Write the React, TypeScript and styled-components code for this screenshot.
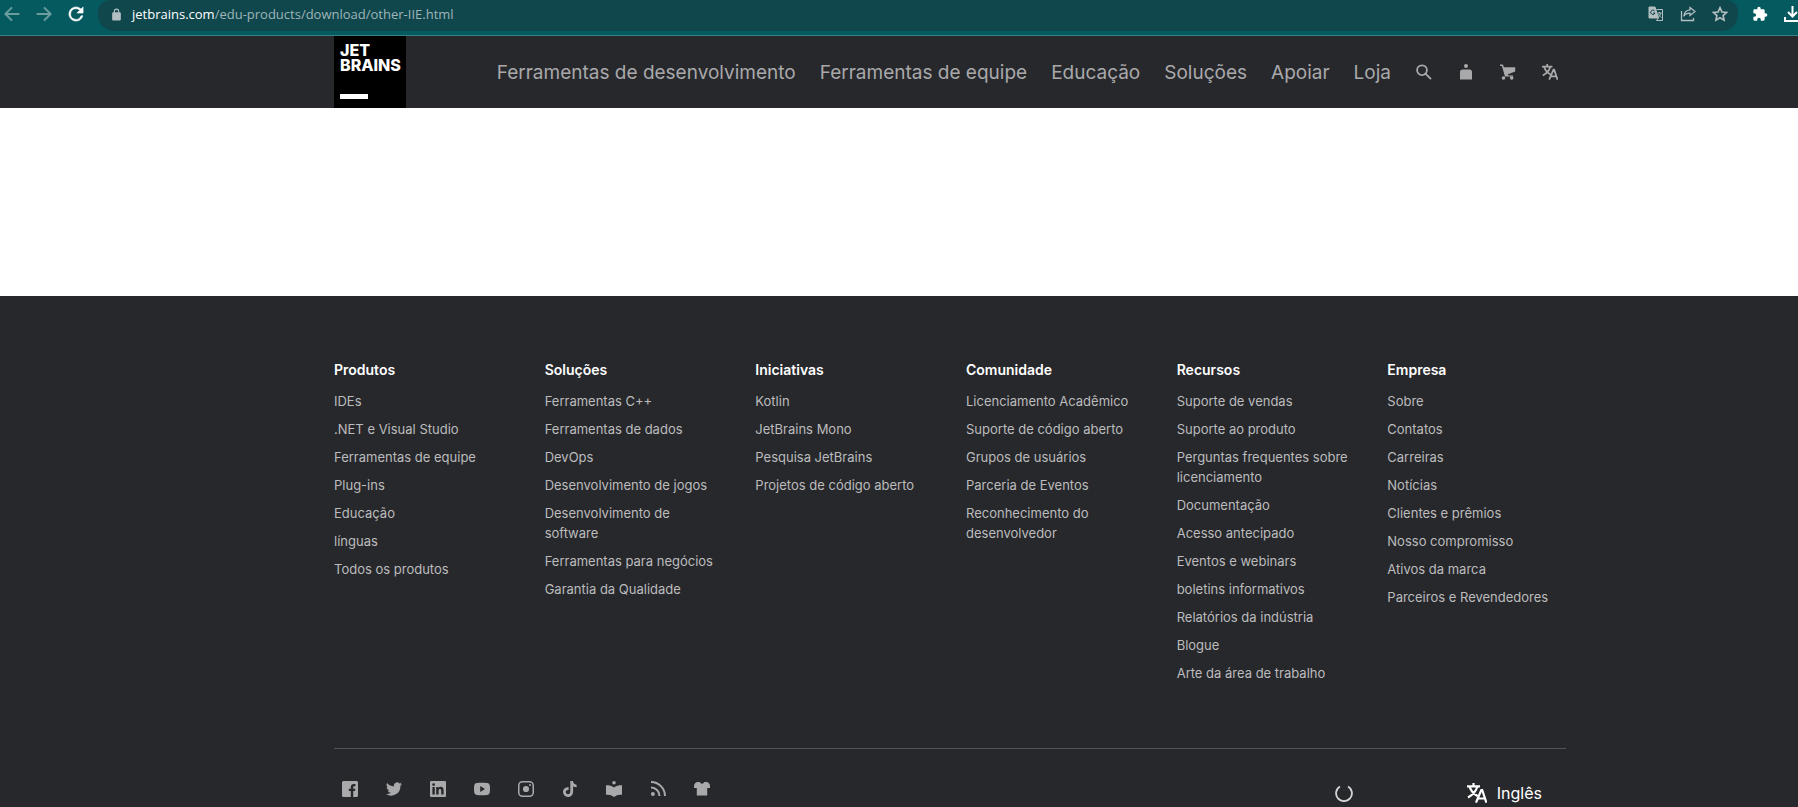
import React from "react";
import styled, { createGlobalStyle } from "styled-components";

const GlobalStyle = createGlobalStyle`
  *, *::before, *::after { box-sizing: border-box; }
  body { margin: 0; background: #ffffff; font-family: Inter, "Liberation Sans", sans-serif; }
  ul { list-style: none; margin: 0; padding: 0; }
  a { color: inherit; text-decoration: none; }
  button { border: 0; padding: 0; background: none; color: inherit; font: inherit; cursor: pointer; }
  svg { display: block; }
`;

const Page = styled.div`
  display: flex;
  flex-direction: column;
  min-height: 100vh;
  overflow-x: hidden;
`;

const BrowserBar = styled.div`
  display: flex;
  align-items: flex-start;
  height: 36px;
  overflow: hidden;
  background: #055a60;
  border-bottom: 1px solid #378083;
`;

const BarButtons = styled.div<{ $width: number; $start: number; $gap: number }>`
  display: flex;
  flex: none;
  align-items: center;
  gap: ${(p) => p.$gap}px;
  width: ${(p) => p.$width}px;
  height: 28px;
  padding-left: ${(p) => p.$start}px;
`;

const BarButton = styled.button<{ $muted?: boolean }>`
  flex: none;
  color: ${(p) => (p.$muted ? "#6d9c9f" : "#ffffff")};
`;

const AddressBar = styled.div`
  display: flex;
  flex: 1;
  align-items: center;
  height: 31px;
  padding: 0 10px 3px 12px;
  border-radius: 16px;
  border-top-left-radius: 12px;
  border-top-right-radius: 12px;
  background: #0f474d;
  color: #b4bfc1;
`;

const Address = styled.div`
  flex: 1;
  margin-left: 9px;
  font-family: "Open Sans", "Noto Sans", sans-serif;
  font-size: 13px;
  line-height: 20px;
  color: #9fb5b8;
  strong { font-weight: 400; color: #ffffff; }
`;

const AddressActions = styled.div`
  display: flex;
  gap: 16px;
`;

const Header = styled.header`
  display: flex;
  align-items: center;
  justify-content: space-between;
  height: 72px;
  padding: 0 232px 0 334px;
  background: #27282c;
  color: #a9a9ab;
`;

const Logo = styled.a`
  display: flex;
  flex-direction: column;
  justify-content: space-between;
  width: 72px;
  height: 72px;
  padding: 7px 6px 9px;
  background: #000000;
  color: #ffffff;
`;

const LogoText = styled.span`
  display: flex;
  flex-direction: column;
  font-size: 16px;
  font-weight: 800;
  line-height: 15px;
  white-space: nowrap;
`;

const LogoBar = styled.span`
  width: 28px;
  height: 5px;
  background: #ffffff;
`;

const Nav = styled.nav`
  display: flex;
  align-items: center;
  gap: 21px;
`;

const NavLinks = styled.div`
  display: flex;
  gap: 24px;
  padding-top: 2px;
  font-size: 19px;
  line-height: 28px;
  white-space: nowrap;
`;

const HeaderActions = styled.div`
  display: flex;
  gap: 18px;
  padding-right: 4px;
`;

const IconButton = styled.button`
  display: grid;
  place-items: center;
  width: 24px;
  height: 24px;
`;

const Main = styled.main`
  height: 188px;
`;

const Footer = styled.footer`
  flex: 1;
  padding: 64px 232px 0 334px;
  background: #27282c;
  color: #bcbcbd;
`;

const Columns = styled.div`
  display: grid;
  grid-template-columns: repeat(6, minmax(0, 1fr));
  column-gap: 32px;
  padding-bottom: 57px;
  font-size: 13px;
  line-height: 20px;
`;

const ColumnTitle = styled.h2`
  margin: 0 0 11px;
  font-size: 14px;
  font-weight: 600;
  line-height: 20px;
  color: #ffffff;
`;

const LinkItem = styled.li`
  margin-bottom: 8px;
`;

const Bottom = styled.div`
  display: flex;
  align-items: flex-start;
  justify-content: space-between;
  padding-top: 24px;
  border-top: 1px solid #525356;
`;

const SocialList = styled.ul`
  display: flex;
  gap: 12px;
  color: #a9a9ab;
`;

const SocialLink = styled.a`
  display: grid;
  place-items: center;
  width: 32px;
  height: 32px;
`;

const BottomRight = styled.div`
  display: flex;
  align-items: center;
  gap: 114px;
  padding: 8px 24px 0 0;
  color: #d4d4d5;
`;

const Language = styled.button`
  display: flex;
  align-items: center;
  gap: 10px;
  font-size: 16px;
  line-height: 24px;
  color: #ffffff;
`;

const LINK_COLUMNS = [
  { title: "Produtos", links: ["IDEs", ".NET e Visual Studio", "Ferramentas de equipe", "Plug-ins", "Educação", "línguas", "Todos os produtos"] },
  { title: "Soluções", links: ["Ferramentas C++", "Ferramentas de dados", "DevOps", "Desenvolvimento de jogos", "Desenvolvimento de software", "Ferramentas para negócios", "Garantia da Qualidade"] },
  { title: "Iniciativas", links: ["Kotlin", "JetBrains Mono", "Pesquisa JetBrains", "Projetos de código aberto"] },
  { title: "Comunidade", links: ["Licenciamento Acadêmico", "Suporte de código aberto", "Grupos de usuários", "Parceria de Eventos", "Reconhecimento do desenvolvedor"] },
  { title: "Recursos", links: ["Suporte de vendas", "Suporte ao produto", "Perguntas frequentes sobre licenciamento", "Documentação", "Acesso antecipado", "Eventos e webinars", "boletins informativos", "Relatórios da indústria", "Blogue", "Arte da área de trabalho"] },
  { title: "Empresa", links: ["Sobre", "Contatos", "Carreiras", "Notícias", "Clientes e prêmios", "Nosso compromisso", "Ativos da marca", "Parceiros e Revendedores"] },
];

const NAV_LINKS = ["Ferramentas de desenvolvimento", "Ferramentas de equipe", "Educação", "Soluções", "Apoiar", "Loja"];

const Stroke = ({ d, size = 16, width = 2, box = 24 }: { d: string; size?: number; width?: number; box?: number }) => (
  <svg width={size} height={size} viewBox={`0 0 ${box} ${box}`} fill="none" stroke="currentColor" strokeWidth={width} aria-hidden="true">
    <path d={d} />
  </svg>
);

const Fill = ({ d, size = 16, box = 24 }: { d: string; size?: number; box?: number }) => (
  <svg width={size} height={size} viewBox={`0 0 ${box} ${box}`} fill="currentColor" fillRule="evenodd" aria-hidden="true">
    <path d={d} />
  </svg>
);

const TranslateIcon = ({ size }: { size: number }) => (
  <svg width={size} height={size} viewBox="0 0 20 20" fill="none" stroke="currentColor" strokeWidth="2.200" aria-hidden="true">
    <path d="M0 3.300h13M6.500 0v3.300M2.700 3.800C4 8 7 11 10.500 13M10.300 3.800C9 8.500 5 12.300 1 14.500M9 19.600L14.300 7h.9l4.200 12.600M10.800 15.500h7.400" />
  </svg>
);

const RELOAD = "M17.650 6.350A7.960 7.960 0 0 0 12 4a8 8 0 1 0 7.730 10h-2.080A6 6 0 1 1 12 6c1.660 0 3.140.69 4.220 1.780L13 11h7V4l-2.350 2.350z";
const LOCK = "M18 8h-1V6A5 5 0 0 0 7 6v2H6a2 2 0 0 0-2 2v11a2 2 0 0 0 2 2h12a2 2 0 0 0 2-2V10a2 2 0 0 0-2-2zM9 6a3 3 0 0 1 6 0v2H9z";
const PUZZLE = "M20.500 11H19V7c0-1.100-.900-2-2-2h-4V3.500a2.500 2.500 0 0 0-5 0V5H4c-1.100 0-2 .9-2 2v3.800h1.500a2.700 2.700 0 0 1 0 5.400H2V20c0 1.100.9 2 2 2h3.800v-1.500a2.700 2.700 0 0 1 5.400 0V22H17c1.100 0 2-.9 2-2v-4h1.500a2.500 2.500 0 0 0 0-5z";

const SOCIALS = [
  { name: "Facebook", d: "M1.500 0h13A1.500 1.500 0 0 1 16 1.500v13a1.500 1.500 0 0 1-1.500 1.500H11.200V10h1.900l.3-2.200h-2.200V6.400c0-.7.3-1.100 1.100-1.100h1.200V3.200C13.200 3.100 12.600 3 11.900 3 10 3 8.800 4.100 8.800 6.100v1.700H6.800V10h2v6H1.500A1.500 1.500 0 0 1 0 14.500v-13A1.500 1.500 0 0 1 1.500 0z" },
  { name: "Twitter", d: "M16 2.900a6.500 6.500 0 0 1-1.900.5 3.300 3.300 0 0 0 1.500-1.800 6.600 6.600 0 0 1-2.100.8A3.300 3.300 0 0 0 7.900 5.400 9.300 9.300 0 0 1 1.100 2a3.300 3.300 0 0 0 1 4.400 3.300 3.300 0 0 1-1.500-.4 3.300 3.300 0 0 0 2.600 3.300 3.300 3.300 0 0 1-1.500.1 3.300 3.300 0 0 0 3.100 2.300A6.600 6.600 0 0 1 0 13a9.300 9.300 0 0 0 14.400-8.300A6.700 6.700 0 0 0 16 2.900z" },
  { name: "LinkedIn", d: "M1 0h14a1 1 0 0 1 1 1v14a1 1 0 0 1-1 1H1a1 1 0 0 1-1-1V1a1 1 0 0 1 1-1zM2.400 6v7.600h2.400V6zM3.600 2.200a1.400 1.400 0 1 0 0 2.800 1.400 1.400 0 0 0 0-2.800zM6.200 6v7.600h2.400V9.800c0-1 .3-1.900 1.400-1.900 1.200 0 1.200 1.100 1.200 2v3.700h2.400V9.400c0-2-.5-3.600-2.900-3.600-1.100 0-1.900.6-2.200 1.200V6z" },
  { name: "YouTube", d: "M3 2C6 1.600 10 1.600 13 2c1.700.2 2.600 1.200 2.800 2.700.3 2.200.3 4.400 0 6.600-.2 1.500-1.100 2.500-2.800 2.700-3 .4-7 .4-10 0C1.300 13.800.4 12.800.2 11.300-.1 9.100-.1 6.900.2 4.700.4 3.200 1.300 2.200 3 2zM6.200 5v6l4.800-3z" },
  { name: "Instagram", d: "M4.500 0h7A4.500 4.500 0 0 1 16 4.500v7a4.500 4.500 0 0 1-4.500 4.500h-7A4.500 4.500 0 0 1 0 11.500v-7A4.500 4.500 0 0 1 4.500 0zM4.500 1.500a3 3 0 0 0-3 3v7a3 3 0 0 0 3 3h7a3 3 0 0 0 3-3v-7a3 3 0 0 0-3-3zM8 4.900a3.100 3.100 0 1 1 0 6.200 3.100 3.100 0 0 1 0-6.200zM12 3a1 1 0 1 1 0 2 1 1 0 0 1 0-2z" },
  { name: "TikTok", d: "M8.300 0H11c.1 2.200 1.400 3.500 3.600 3.700v2.600c-1.300.1-2.500-.4-3.500-1.100v5.200c0 3.800-2.700 5.600-5.100 5.600A4.900 4.900 0 0 1 1 11c0-3.200 2.700-5.100 5.600-4.800v2.800C5 8.600 3.800 9.600 3.800 11c0 1.300 1 2.200 2.200 2.200 1.600 0 2.300-1.200 2.300-2.600z" },
  { name: "Blog", d: "M8 0a1.800 1.800 0 1 1 0 3.600A1.800 1.800 0 0 1 8 0zM0 4.200c3.200 0 6.200.5 8 2.200 1.800-1.700 4.800-2.200 8-2.200v9.600c-2.500 0-4.700.3-6.300 1.100L8 16l-1.700-1.100C4.700 14.100 2.500 13.800 0 13.800z" },
  { name: "RSS", d: "M2.900 11a2 2 0 1 1 0 4 2 2 0 0 1 0-4zM1 5.500A9.500 9.500 0 0 1 10.500 15h-2A7.500 7.500 0 0 0 1 7.500zM1 0a15 15 0 0 1 15 15h-2A13 13 0 0 0 1 2z" },
  { name: "Merchandise", d: "M4 1h1.800C6.300 2.200 7 2.700 8 2.700s1.700-.5 2.200-1.700H12C14.500 1 16 2.700 16 5v2h-2.800v7.500H2.800V7H0V5c0-2.300 1.500-4 4-4z" },
];

export default function App() {
  return (
    <>
      <GlobalStyle />
      <Page>
        <BrowserBar>
          <BarButtons $width={98} $start={4} $gap={16}>
            <BarButton $muted aria-label="Voltar"><Stroke size={16} d="M23 12H3M12 2L2 12l10 10" width={3} /></BarButton>
            <BarButton $muted aria-label="Avançar"><Stroke size={16} d="M1 12h20M12 2l10 10-10 10" width={3} /></BarButton>
            <BarButton aria-label="Recarregar"><svg width="16" height="16" viewBox="3 3 18 18" fill="currentColor"><path d={RELOAD} stroke="currentColor" strokeWidth="0.600" /></svg></BarButton>
          </BarButtons>
          <AddressBar>
            <Fill size={13} d={LOCK} />
            <Address><strong>jetbrains.com</strong>/edu-products/download/other-IIE.html</Address>
            <AddressActions>
              <BarButton aria-label="Traduzir">
                <svg width="16" height="16" viewBox="0 0 16 16" fill="none" stroke="#b4bfc1">
                  <path d="M1 1h6l3.500 11H1z" fill="#b4bfc1" />
                  <path d="M8.500 3.500h6v11h-6l2-2.500M9.500 7h4M11.500 6v1M13 7c-.5 2-1.500 3-2.500 4M10.500 8c.5 1.500 1.500 2.500 3 3.500" />
                  <path d="M6.500 4.800A2.200 2.200 0 1 0 7 7H5" stroke="#0f474d" />
                </svg>
              </BarButton>
              <BarButton aria-label="Compartilhar">
                <svg width="16" height="16" viewBox="0 0 16 16" fill="none" stroke="#b4bfc1" strokeWidth="1.300">
                  <path d="M1.500 5v9.500h12V12M10 1.500l5 4-5 4V7.200C7 7.200 5 8.200 3.800 10.300 4 6.800 6.500 4 10 3.800z" />
                </svg>
              </BarButton>
              <BarButton aria-label="Favoritar">
                <svg width="16" height="16" viewBox="0 0 24 24" fill="none" stroke="#b4bfc1" strokeWidth="2.400">
                  <path d="M12 2.500l2.800 6.400 7 .7-5.200 4.700 1.500 6.900-6.100-3.600-6.100 3.600 1.500-6.900-5.200-4.700 7-.7z" />
                </svg>
              </BarButton>
            </AddressActions>
          </AddressBar>
          <BarButtons $width={60} $start={14} $gap={16}>
            <BarButton aria-label="Extensões"><Fill size={16} d={PUZZLE} /></BarButton>
            <BarButton aria-label="Downloads"><Stroke size={17} box={17} d="M8.500 0v10M4 6l4.500 4.500L13 6M1 11v4h15v-4" width={2} /></BarButton>
          </BarButtons>
        </BrowserBar>

        <Header>
          <Logo href="#" aria-label="JetBrains">
            <LogoText><span>JET</span><span>BRAINS</span></LogoText>
            <LogoBar />
          </Logo>
          <Nav>
            <NavLinks>
              {NAV_LINKS.map((label) => <a href="#" key={label}>{label}</a>)}
            </NavLinks>
            <HeaderActions>
              <IconButton aria-label="Pesquisar"><Stroke size={16} box={16} d="M10.900 6.200A4.900 4.900 0 1 1 1.100 6.200a4.900 4.900 0 0 1 9.800 0zM9.500 9.700l5.500 5.500" width={1.800} /></IconButton>
              <IconButton aria-label="Conta"><Fill box={16} d="M8 0a2 2 0 1 1 0 4 2 2 0 0 1 0-4zM4.500 5.500h7A2.500 2.500 0 0 1 14 8v7.500H2V8a2.500 2.500 0 0 1 2.500-2.500z" /></IconButton>
              <IconButton aria-label="Carrinho"><Fill box={16} d="M0 .5h2.800L4 3.200h11.200V7.500L7.500 10.500l1.200.9H13v1H5L1.900 2H0zM3.500 12.200a1.800 1.800 0 1 1 0 3.600 1.800 1.800 0 0 1 0-3.600zM11.700 12.200a1.800 1.800 0 1 1 0 3.600 1.800 1.800 0 0 1 0-3.600z" /></IconButton>
              <IconButton aria-label="Idioma"><TranslateIcon size={16} /></IconButton>
            </HeaderActions>
          </Nav>
        </Header>

        <Main />

        <Footer>
          <Columns>
            {LINK_COLUMNS.map((column) => (
              <section key={column.title}>
                <ColumnTitle>{column.title}</ColumnTitle>
                <ul>
                  {column.links.map((link) => <LinkItem key={link}><a href="#">{link}</a></LinkItem>)}
                </ul>
              </section>
            ))}
          </Columns>
          <Bottom>
            <SocialList>
              {SOCIALS.map((social) => (
                <li key={social.name}>
                  <SocialLink href="#" aria-label={social.name}><Fill size={16} box={16} d={social.d} /></SocialLink>
                </li>
              ))}
            </SocialList>
            <BottomRight>
              <Stroke size={18} box={20} width={2} d="M5.500 2.700A8.800 8.800 0 1 0 14.500 2.700" />
              <Language><TranslateIcon size={20} />Inglês</Language>
            </BottomRight>
          </Bottom>
        </Footer>
      </Page>
    </>
  );
}
